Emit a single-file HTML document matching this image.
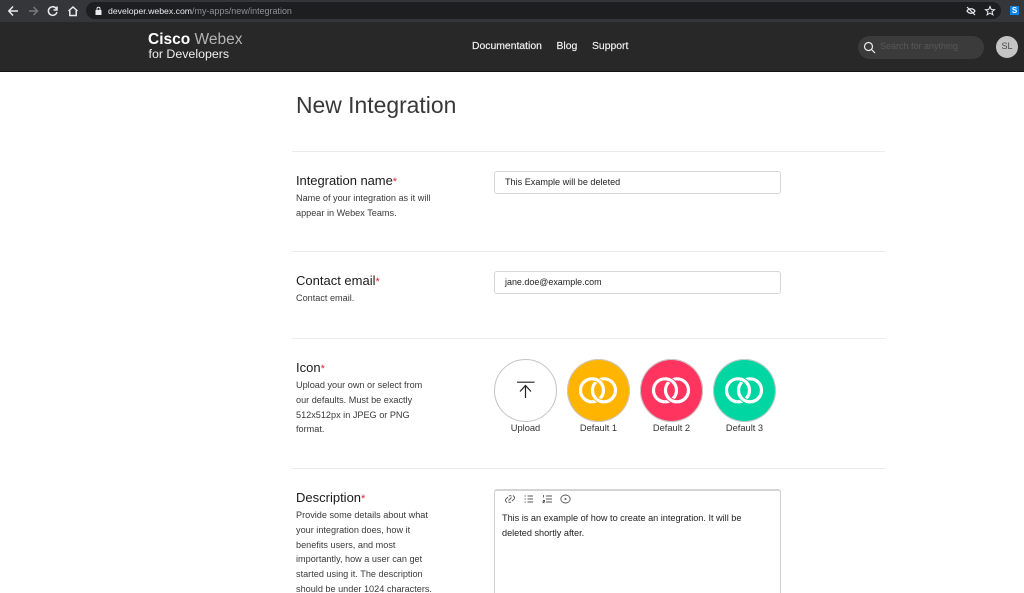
<!DOCTYPE html>
<html><head><meta charset="utf-8">
<style>
html,body{margin:0;padding:0;width:1024px;height:593px;overflow:hidden;background:#fff;font-family:"Liberation Sans",sans-serif;color:#222}
#w{position:relative;width:1024px;height:593px;overflow:hidden;background:#fff}
.a{position:absolute;white-space:nowrap}
svg{position:absolute;display:block}
.hr{position:absolute;left:292px;width:593px;height:1px;background:#ebebeb}
.h{position:absolute;left:296px;font-size:13px;line-height:16px;color:#1a1a1a;white-space:nowrap}
.h i{color:#e0243a;font-style:normal;font-size:11px}
.d{position:absolute;left:296px;font-size:9.15px;line-height:14.8px;color:#3a3a3a;white-space:nowrap}
.inp{position:absolute;left:494px;width:285px;height:21px;border:1px solid #d6d6d6;border-radius:3px;font-size:9.1px;line-height:21px;color:#222;text-indent:10px;background:#fff}
.c{position:absolute;top:358.5px;width:63px;height:63px;border-radius:50%}
.l{position:absolute;top:422px;width:80px;text-align:center;font-size:9.3px;line-height:12px;color:#333}
.n{position:absolute;top:40px;font-size:10.4px;line-height:13px;color:#f2f2f2;white-space:nowrap;-webkit-text-stroke:.15px #f2f2f2}
</style></head><body><div id="w">
<div class="a" style="left:0;top:0;width:1024px;height:22px;background:#35363a"></div>
<div class="a" style="left:86px;top:2px;width:915px;height:17px;border-radius:9px;background:#1d1e20"></div>
<svg style="left:0;top:0" width="90" height="22" fill="none" stroke-width="1.5">
<path d="M18 11H9M13 6.500 8.800 11l4.200 4.500" stroke="#e8eaed"/>
<path d="M29 11h8M33.500 7l4 4-4 4" stroke="#77797c"/>
<path d="M56.500 9a4.300 4.300 0 1 0 .4 3M57 6.500V10h-3.500" stroke="#e8eaed"/>
<path d="M68.500 11 73 7l4.500 4M69.800 10.500V15.500h6.400V10.500" stroke="#e8eaed"/>
</svg>
<svg style="left:94px;top:6px" width="10" height="10"><rect x="1.500" y="4" width="6" height="5" fill="#e8eaed"/><path d="M3 4V2.800a1.500 1.500 0 0 1 3 0V4" stroke="#e8eaed" fill="none"/></svg>
<div class="a" style="left:108px;top:5px;font-size:8.7px;line-height:12px;color:#e8eaed">developer.webex.com<span style="color:#8f9194;font-size:8.95px">/my-apps/new/integration</span></div>
<svg style="left:964px;top:5px" width="32" height="12" fill="none" stroke="#e8eaed">
<path d="M3 6c2-3 6-3 8 0-2 3-6 3-8 0zM3 2l8 8" stroke-width="1.200"/>
<path d="M26 1.500l1.300 3 3.200.2-2.500 2 .9 3.100-2.900-1.700-2.900 1.700.9-3.100-2.500-2 3.200-.2z" stroke-width="1"/>
</svg>
<div class="a" style="left:1010px;top:6px;width:9px;height:9px;background:#0a84e6;color:#fff;font-size:8px;line-height:9px;font-weight:bold;text-align:center">S</div>

<div class="a" style="left:0;top:22px;width:1024px;height:49px;background:#282828"></div>
<div class="a" style="left:0;top:71px;width:1024px;height:1px;background:#111"></div>
<div class="a" style="left:148px;top:30.5px;font-size:15.5px;line-height:18px;color:#fff"><b>Cisco</b> <span style="color:#b4b4b4">Webex</span></div>
<div class="a" style="left:148.5px;top:47px;font-size:12.4px;line-height:15px;color:#eee">for Developers</div>
<div class="n" style="left:472px">Documentation</div>
<div class="n" style="left:556.5px">Blog</div>
<div class="n" style="left:592px">Support</div>
<div class="a" style="left:858px;top:36px;width:126px;height:23px;border-radius:12px;background:#3b3b3b"></div>
<svg style="left:863px;top:41px" width="13" height="13" fill="none" stroke="#eee" stroke-width="1.200"><circle cx="5.500" cy="5.500" r="4"/><path d="M8.500 8.500 12 12"/></svg>
<div class="a" style="left:880px;top:40px;font-size:9px;line-height:13px;color:#585858">Search for anything</div>
<div class="a" style="left:996px;top:36px;width:22px;height:22px;border-radius:50%;background:#c4c4c4;color:#4a4a4a;font-size:9px;line-height:21px;text-align:center">SL</div>

<div class="a" style="left:296px;top:92px;font-size:22.9px;line-height:26px;color:#383838">New Integration</div>

<div class="hr" style="top:151px"></div>
<div class="h" style="top:172.5px;letter-spacing:-.05px">Integration name<i>*</i></div>
<div class="d" style="top:191px">Name of your integration as it will<br>appear in Webex Teams.</div>
<div class="inp" style="top:171px">This Example will be deleted</div>

<div class="hr" style="top:251px"></div>
<div class="h" style="top:272.5px">Contact email<i>*</i></div>
<div class="d" style="top:291px">Contact email.</div>
<div class="inp" style="top:271px;font-size:8.95px">jane.doe@example.com</div>

<div class="hr" style="top:338px"></div>
<div class="h" style="top:359.5px">Icon<i>*</i></div>
<div class="d" style="top:378px">Upload your own or select from<br>our defaults. Must be exactly<br>512x512px in JPEG or PNG<br>format.</div>

<div class="c" style="left:494px;width:61px;height:61px;border:1px solid #c4c4c4;background:#fff"></div>
<svg style="left:516px;top:381px" width="20" height="20" fill="none" stroke="#222" stroke-width="1.200"><path d="M1 1.200h17.500M9.500 17V4.500M4 10.500l5.500-6 5.500 6"/></svg>
<div class="c" style="left:567px;background:#ffb400;box-shadow:0 0 0 1px #c9c9c9 inset"></div>
<div class="c" style="left:640px;background:#ff3560;box-shadow:0 0 0 1px #c9c9c9 inset"></div>
<div class="c" style="left:713px;background:#00d6a2;box-shadow:0 0 0 1px #c9c9c9 inset"></div>
<svg style="left:567px;top:359px" width="210" height="63" fill="none" stroke-width="3.200">
<g stroke="#fff"><circle cx="25" cy="31.300" r="11.500"/><circle cx="37" cy="31.300" r="11.500"/></g>
<path d="M27.270 20.030A11.500 11.500 0 0 1 33.990 24.120" stroke="#ffb400" stroke-width="5"/><path d="M34.730 42.570A11.500 11.500 0 0 1 28.010 38.480" stroke="#ffb400" stroke-width="5"/>
<path d="M25.680 19.820A11.500 11.500 0 0 1 34.900 25.450" stroke="#fff"/><path d="M36.320 42.780A11.500 11.500 0 0 1 27.100 37.150" stroke="#fff"/>
<g transform="translate(73 0)"><g stroke="#fff"><circle cx="25" cy="31.300" r="11.500"/><circle cx="37" cy="31.300" r="11.500"/></g>
<path d="M27.270 20.030A11.500 11.500 0 0 1 33.990 24.120" stroke="#ff3560" stroke-width="5"/><path d="M34.730 42.570A11.500 11.500 0 0 1 28.010 38.480" stroke="#ff3560" stroke-width="5"/>
<path d="M25.680 19.820A11.500 11.500 0 0 1 34.900 25.450" stroke="#fff"/><path d="M36.320 42.780A11.500 11.500 0 0 1 27.100 37.150" stroke="#fff"/></g>
<g transform="translate(146 0)"><g stroke="#fff"><circle cx="25" cy="31.300" r="11.500"/><circle cx="37" cy="31.300" r="11.500"/></g>
<path d="M27.270 20.030A11.500 11.500 0 0 1 33.990 24.120" stroke="#00d6a2" stroke-width="5"/><path d="M34.730 42.570A11.500 11.500 0 0 1 28.010 38.480" stroke="#00d6a2" stroke-width="5"/>
<path d="M25.680 19.820A11.500 11.500 0 0 1 34.900 25.450" stroke="#fff"/><path d="M36.320 42.780A11.500 11.500 0 0 1 27.100 37.150" stroke="#fff"/></g>
</svg>
<div class="l" style="left:485.5px">Upload</div>
<div class="l" style="left:558.5px">Default 1</div>
<div class="l" style="left:631.5px">Default 2</div>
<div class="l" style="left:704.5px">Default 3</div>

<div class="hr" style="top:468px"></div>
<div class="h" style="top:489.5px">Description<i>*</i></div>
<div class="d" style="top:508px">Provide some details about what<br>your integration does, how it<br>benefits users, and most<br>importantly, how a user can get<br>started using it. The description<br>should be under 1024 characters.</div>
<div class="a" style="left:494px;top:488.5px;width:285px;height:120px;border:1px solid #d0d0d0;border-top:2px solid #d4d4d4;border-radius:3px;background:#fff"></div>
<svg style="left:504px;top:493px" width="70" height="12" fill="none" stroke="#555" stroke-width=".9">
<path d="M3 9.500 2 8.500a1.800 1.800 0 0 1 0-2.500l2-2M9 2.500l1 1a1.800 1.800 0 0 1 0 2.500l-2 2M4.500 7.500l3-3M5 3.200a1.800 1.800 0 0 1 2.500 0M7 8.800a1.800 1.800 0 0 1-2.500 0"/>
<path d="M23.500 3h5.500M23.500 6h5.500M23.500 9h5.500M20.500 3h1.200M20.500 6h1.200M20.500 9h1.200"/>
<path d="M42 3h6M42 6h6M42 9h6M39.500 2v2.500M39 7.500h1.500v1.200H39v1h1.500"/>
<ellipse cx="61.500" cy="6" rx="4.700" ry="4"/><circle cx="61.500" cy="6" r=".6"/>
</svg>
<div class="a" style="left:502px;top:511px;font-size:9.15px;line-height:15px;color:#222">This is an example of how to create an integration. It will be<br>deleted shortly after.</div>
</div></body></html>
